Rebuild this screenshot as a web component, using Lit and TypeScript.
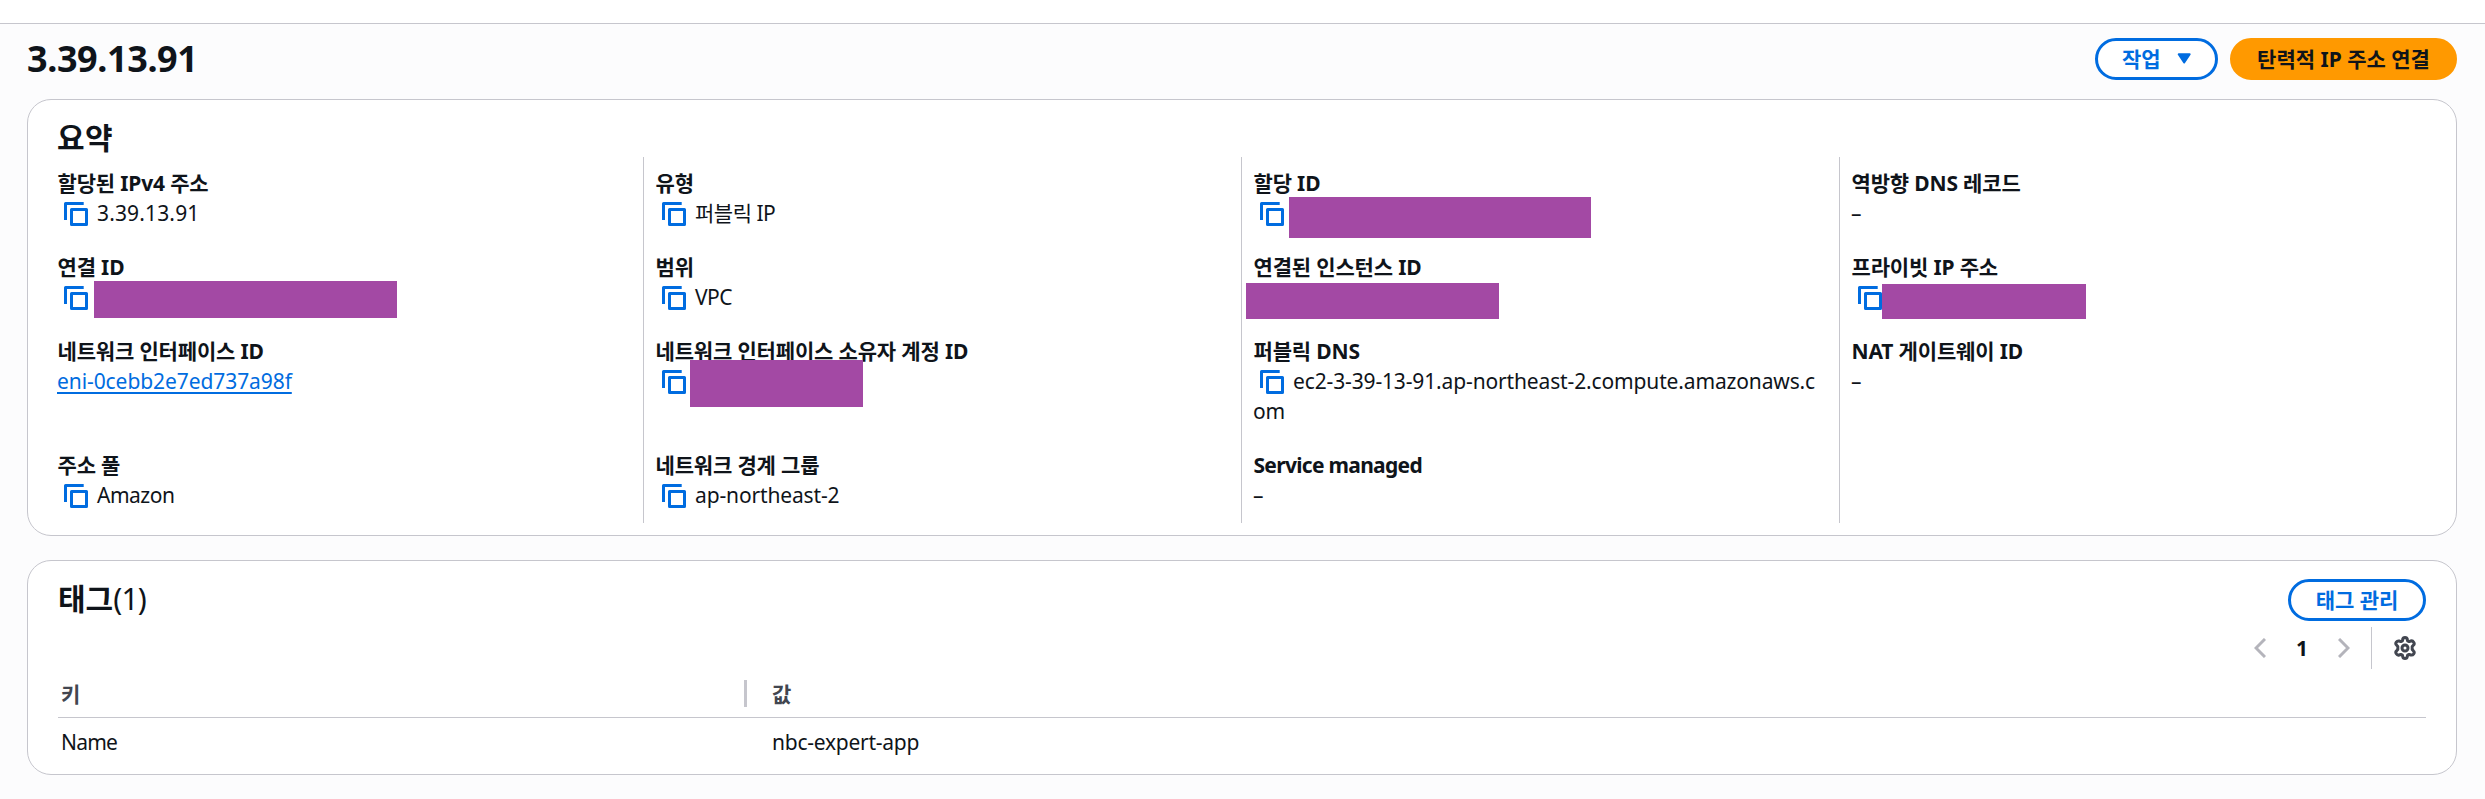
import { LitElement, html, css, svg, nothing } from "lit";
import { customElement, property } from "lit/decorators.js";

interface Field {
  label: string;
  value?: string;
  copy?: boolean;
  kind?: string;
  mask?: string;
  latin?: boolean;
}

const COLUMNS: Field[][] = [
  [
    { label: "할당된 IPv4 주소", value: "3.39.13.91", copy: true, kind: "address" },
    { label: "연결 ID", copy: true, mask: "association" },
    { label: "네트워크 인터페이스 ID", value: "eni-0cebb2e7ed737a98f", kind: "link" },
    { label: "주소 풀", value: "Amazon", copy: true, kind: "word" },
  ],
  [
    { label: "유형", value: "퍼블릭 IP", copy: true, kind: "word" },
    { label: "범위", value: "VPC", copy: true, kind: "word" },
    { label: "네트워크 인터페이스 소유자 계정 ID", copy: true, mask: "owner" },
    { label: "네트워크 경계 그룹", value: "ap-northeast-2", copy: true },
  ],
  [
    { label: "할당 ID", copy: true, mask: "allocation" },
    { label: "연결된 인스턴스 ID", mask: "instance" },
    { label: "퍼블릭 DNS", value: "ec2-3-39-13-91.ap-northeast-2.compute.amazonaws.com", copy: true },
    { label: "Service managed", value: "–", latin: true },
  ],
  [
    { label: "역방향 DNS 레코드", value: "–" },
    { label: "프라이빗 IP 주소", copy: true, mask: "private-ip" },
    { label: "NAT 게이트웨이 ID", value: "–" },
  ],
];

const copyIcon = svg`<svg class="copy" width="24" height="24" viewBox="0 0 24 24" fill="none"
  stroke="#006ce0" stroke-width="3" stroke-linejoin="round">
  <path d="M1.5 18V1.5H19.7"/><path d="M7.5 7.5H22.5V22.5H7.5Z"/></svg>`;

@customElement("summary-field")
class SummaryField extends LitElement {
  @property({ attribute: false }) field!: Field;

  static styles = css`
    :host { display: block; }
    .label { font-weight: 700; height: 30px; white-space: nowrap; letter-spacing: -0.16px; padding-left: 0.5px; }
    .label.latin { letter-spacing: -0.7px; }
    .value { position: relative; min-height: 30px; word-break: break-all; letter-spacing: -0.14px; }
    .copy { margin: 0 9px 0 7px; vertical-align: -5px; }
    .address { letter-spacing: 0.15px; }
    .word { letter-spacing: -0.5px; }
    .link { color: #006ce0; letter-spacing: -0.08px; text-decoration: underline; text-decoration-thickness: 2px; text-underline-offset: 3px; }
    .mask { position: absolute; background: #a349a4; }
    .association { left: 37px; top: -1px; width: 303px; height: 37px; }
    .owner { left: 35px; top: -6px; width: 173px; height: 47px; }
    .allocation { left: 36px; top: -1px; width: 302px; height: 41px; }
    .instance { left: -7px; top: 1px; width: 253px; height: 36px; }
    .private-ip { left: 31px; top: 2px; width: 204px; height: 35px; }
  `;

  render() {
    const { label, value, copy, kind, mask, latin } = this.field;
    return html`
      <div class="label ${latin ? "latin" : ""}">${label}</div>
      <div class="value">${copy ? copyIcon : nothing}${value
        ? html`<span class=${kind ?? "text"}>${value}</span>`
        : nothing}${mask ? html`<span class="mask ${mask}"></span>` : nothing}</div>
    `;
  }
}

@customElement("app-root")
class AppRoot extends LitElement {
  static styles = css`
    :host {
      display: block; box-sizing: border-box; height: 799px; overflow: hidden;
      background: #fcfcfd; color: #0f141a;
      font: 21px/30px "Noto Sans", "Noto Sans CJK KR", sans-serif;
    }
    .topbar { height: 23px; background: #fff; border-bottom: 1px solid #c6c6cd; }
    .page { padding: 14px 28px 0 27px; }
    .header, .actions, .tags-head, .pager { display: flex; align-items: center; }
    .header, .tags-head { justify-content: space-between; }
    .header { height: 42px; margin-bottom: 19px; }
    h1 { margin: 0; font-size: 36px; line-height: 42px; letter-spacing: -0.4px; }
    h2 { margin: 0; font-size: 30px; line-height: 36px; }
    .count { font-weight: 400; letter-spacing: -0.8px; }
    .actions { gap: 12px; }
    button {
      box-sizing: border-box; height: 42px; padding: 0 24px 1px; border: 3px solid #006ce0; border-radius: 21px;
      background: #fff; color: #006ce0; font: inherit; font-weight: 700; line-height: 30px;
      display: flex; align-items: center; justify-content: center; white-space: nowrap;
    }
    .menu { width: 123px; gap: 16px; }
    .primary { width: 227px; background: #ff9900; border-color: #ff9900; color: #0f141a; }
    .manage { width: 138px; }
    .card { box-sizing: border-box; background: #fff; border: 1px solid #c6c6cd; border-radius: 24px; }
    .summary { height: 437px; padding: 20px 19px 0 17px; }
    .summary h2 { padding-left: 12px; letter-spacing: 0.5px; }
    .columns { display: grid; grid-template-columns: repeat(4, 598px); margin-top: 1px; height: 366px; }
    .column {
      box-sizing: border-box; padding: 11px 20px 0 11px; border-left: 1px solid #c6c6cd;
      display: grid; grid-template-rows: 60px 60px 90px 60px; row-gap: 24px;
    }
    .column:first-child { border-left-color: transparent; }
    .tags { height: 215px; margin-top: 24px; padding: 18px 30px 0; }
    .tags-head { height: 42px; }
    .tags-head h2 { padding-bottom: 2px; }
    .pager { height: 42px; margin-top: 6px; justify-content: flex-end; }
    .page-number { width: 24px; margin: 0 24px; text-align: center; font-weight: 700; }
    .split { width: 1px; height: 42px; background: #c6c6cd; margin: 0 21px; }
    .gear { margin-right: 9px; }
    .row { display: grid; grid-template-columns: 686px 1fr; padding-left: 3px; }
    .table-head {
      height: 49px; align-items: center; color: #424650; font-weight: 700; padding-top: 1px;
      border-bottom: 1px solid #c6c6cd; box-sizing: border-box;
    }
    .key-head { display: flex; justify-content: space-between; align-items: center; height: 27px; border-right: 3px solid #c6c6cd; }
    .table-row { height: 48px; align-items: center; }
    .row-key { letter-spacing: -0.8px; }
    .row-value { letter-spacing: -0.25px; }
    .cell-value, .row-value { padding-left: 25px; }
  `;

  render() {
    return html`
      <div class="topbar"></div>
      <main class="page">
        <header class="header">
          <h1>3.39.13.91</h1>
          <div class="actions">
            <button class="menu">작업
              <svg width="17" height="13" viewBox="0 0 17 13"><path d="M2 1.5H15L8.5 11.2Z" fill="#006ce0" stroke="#006ce0" stroke-width="2.4" stroke-linejoin="round"/></svg>
            </button>
            <button class="primary">탄력적 IP 주소 연결</button>
          </div>
        </header>
        <section class="card summary">
          <h2>요약</h2>
          <div class="columns">
            ${COLUMNS.map((fields) => html`<div class="column">
              ${fields.map((f) => html`<summary-field .field=${f}></summary-field>`)}
            </div>`)}
          </div>
        </section>
        <section class="card tags">
          <div class="tags-head">
            <h2>태그<span class="count">(1)</span></h2>
            <button class="manage">태그 관리</button>
          </div>
          <div class="pager">
            <svg width="12" height="20" viewBox="0 0 12 20" fill="none" stroke="#b4b4bb" stroke-width="3"><path d="M11 1L2 10L11 19"/></svg>
            <span class="page-number">1</span>
            <svg width="12" height="20" viewBox="0 0 12 20" fill="none" stroke="#b4b4bb" stroke-width="3"><path d="M1 1L10 10L1 19"/></svg>
            <span class="split"></span>
            <svg class="gear" width="24" height="24" viewBox="0 0 24 24" fill="none" stroke="#424650" stroke-width="3" stroke-linejoin="round">
              <path d="M9.8 3.2Q10 1.5 12 1.5T14.2 3.2L14.6 4.8L16.2 5.6L17.8 5Q19.6 4.5 20.7 6.2T20.5 9L19.2 10.4V13.6L20.5 15Q21.8 16.2 20.7 17.8T17.8 19L16.2 18.4L14.6 19.2L14.2 20.8Q14 22.5 12 22.5T9.8 20.8L9.4 19.2L7.8 18.4L6.2 19Q4.4 19.5 3.3 17.8T3.5 15L4.8 13.6V10.4L3.5 9Q2.2 7.8 3.3 6.2T6.2 5L7.8 5.6L9.4 4.8Z"/>
              <circle cx="12" cy="12" r="3"/>
            </svg>
          </div>
          <div class="row table-head"><div class="key-head">키</div><div class="cell-value">값</div></div>
          <div class="row table-row"><div class="row-key">Name</div><div class="row-value">nbc-expert-app</div></div>
        </section>
      </main>
    `;
  }
}
